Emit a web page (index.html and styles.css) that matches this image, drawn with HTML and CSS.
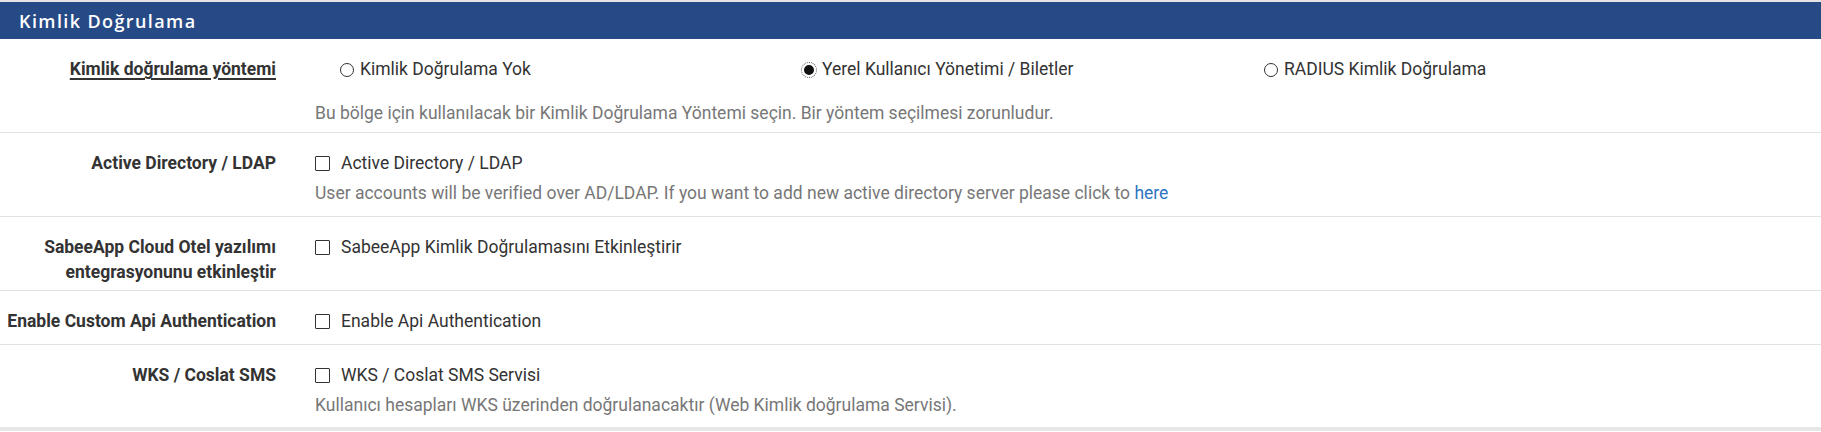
FILE: index.html
```html
<!DOCTYPE html>
<html lang="tr">
<head>
<meta charset="utf-8">
<title>Kimlik Doğrulama</title>
<link rel="stylesheet" href="styles.css">
</head>
<body>
<div class="panel">
  <div class="panel-heading"><h2 class="panel-title">Kimlik Doğrulama</h2></div>
  <div class="panel-body">
    <div class="form-group">
      <div class="col-label"><span class="underlined">Kimlik doğrulama yöntemi</span></div>
      <div class="col-content">
        <div class="radio-row">
          <label class="radio-item"><span class="radio"></span>Kimlik Doğrulama Yok</label>
          <label class="radio-item"><span class="radio checked"></span>Yerel Kullanıcı Yönetimi / Biletler</label>
          <label class="radio-item"><span class="radio"></span>RADIUS Kimlik Doğrulama</label>
        </div>
        <div class="help help-radio">Bu bölge için kullanılacak bir Kimlik Doğrulama Yöntemi seçin. Bir yöntem seçilmesi zorunludur.</div>
      </div>
    </div>
    <div class="form-group">
      <div class="col-label">Active Directory / LDAP</div>
      <div class="col-content">
        <label class="check-item"><span class="checkbox"></span>Active Directory / LDAP</label>
        <div class="help">User accounts will be verified over AD/LDAP. If you want to add new active directory server please click to <a class="link" href="#">here</a></div>
      </div>
    </div>
    <div class="form-group">
      <div class="col-label">SabeeApp Cloud Otel yazılımı<br>entegrasyonunu etkinleştir</div>
      <div class="col-content">
        <label class="check-item"><span class="checkbox"></span>SabeeApp Kimlik Doğrulamasını Etkinleştirir</label>
      </div>
    </div>
    <div class="form-group">
      <div class="col-label">Enable Custom Api Authentication</div>
      <div class="col-content">
        <label class="check-item"><span class="checkbox"></span>Enable Api Authentication</label>
      </div>
    </div>
    <div class="form-group last">
      <div class="col-label">WKS / Coslat SMS</div>
      <div class="col-content">
        <label class="check-item"><span class="checkbox"></span>WKS / Coslat SMS Servisi</label>
        <div class="help">Kullanıcı hesapları WKS üzerinden doğrulanacaktır (Web Kimlik doğrulama Servisi).</div>
      </div>
    </div>
  </div>
</div>
</body>
</html>
```

FILE: styles.css
```css
* { box-sizing: border-box; }
html, body { margin: 0; padding: 0; background: #ffffff; }
body {
  font-family: Roboto, "Liberation Sans", sans-serif;
  font-size: 17.5px;
  line-height: 25px;
  color: #333333;
}
.panel {
  border-top: 2px solid #e4e4e4;
  border-bottom: 4px solid #e6e6e6;
}
.panel-heading {
  background: #264a85;
  height: 37px;
  display: flex;
  align-items: center;
  padding: 0 19px;
}
.panel-title {
  margin: 0;
  font-family: "Open Sans", Roboto, sans-serif;
  font-weight: 600;
  font-size: 18px;
  letter-spacing: 1.4px;
  color: #ffffff;
  line-height: 24px;
}
.form-group {
  display: flex;
  border-bottom: 1px solid #e2e2e2;
  padding: 18px 0 5px;
}
.form-group.last { border-bottom: none; padding-bottom: 4px; }
.col-label {
  flex: 0 0 300px;
  padding-right: 24px;
  text-align: right;
  font-weight: 700;
  color: #333333;
}
.underlined {
  text-decoration: underline;
  text-decoration-thickness: 2px;
  text-underline-offset: 3px;
}
.col-content {
  flex: 1;
  padding-left: 15px;
}
.radio-row {
  display: grid;
  grid-template-columns: 462px 462px 462px;
  padding-left: 25px;
  margin-bottom: 19px;
}
.radio-item, .check-item {
  display: flex;
  align-items: center;
  color: #333333;
}
.check-item { margin-bottom: 5px; }
.radio {
  width: 14px;
  height: 14px;
  border: 1px solid #333333;
  border-radius: 50%;
  margin-right: 6px;
  background: #fff;
}
.radio.checked {
  background: #111111;
  border: 2px solid #ffffff;
  outline: 1px dotted #555555;
  outline-offset: 0;
}
.checkbox {
  width: 15px;
  height: 15px;
  border: 1px solid #333333;
  border-radius: 1px;
  margin-right: 11px;
  background: #fff;
}
.help {
  color: #777777;
  margin-bottom: 5px;
}
.help-radio { margin-bottom: 1px; }
.link { color: #2f76c0; text-decoration: none; }
```
